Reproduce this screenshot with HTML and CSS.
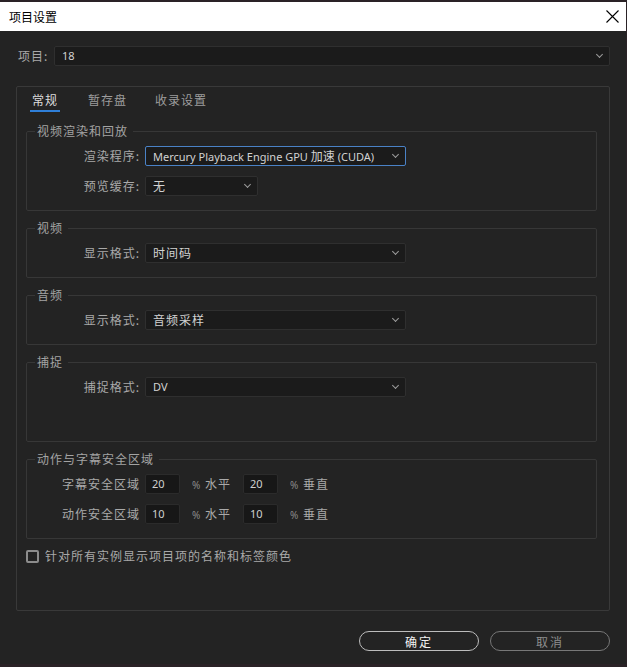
FILE: index.html
```html
<!DOCTYPE html>
<html lang="zh-CN">
<head>
    <meta charset="UTF-8">
    <meta name="viewport" content="width=device-width, initial-scale=1.0">
    <title>项目设置</title>
    <link rel="stylesheet" href="styles.css">
</head>
<body>
    <div class="window">
        <div class="titlebar">
            <span class="title">项目设置</span>
            <svg class="close" width="13" height="13" viewBox="0 0 13 13">
                <path d="M0.5 0.5 L12.5 12.5 M12.5 0.5 L0.5 12.5" stroke="#000" stroke-width="1.1" fill="none"/>
            </svg>
        </div>

        <div class="content">
            <div class="project-row">
                <span class="label">项目:</span>
                <div class="select grow"><span class="value num">18</span><span class="chev"></span></div>
            </div>

            <div class="panel">
                <div class="tabs">
                    <span class="tab active">常规</span>
                    <span class="tab">暂存盘</span>
                    <span class="tab">收录设置</span>
                </div>

                <fieldset>
                    <legend>视频渲染和回放</legend>
                    <div class="row">
                        <span class="label">渲染程序:</span>
                        <div class="select wide focused"><span class="value latin">Mercury Playback Engine GPU <b>加速</b> (CUDA)</span><span class="chev"></span></div>
                    </div>
                    <div class="row">
                        <span class="label">预览缓存:</span>
                        <div class="select small"><span class="value">无</span><span class="chev"></span></div>
                    </div>
                </fieldset>

                <fieldset>
                    <legend>视频</legend>
                    <div class="row">
                        <span class="label">显示格式:</span>
                        <div class="select wide"><span class="value">时间码</span><span class="chev"></span></div>
                    </div>
                </fieldset>

                <fieldset>
                    <legend>音频</legend>
                    <div class="row">
                        <span class="label">显示格式:</span>
                        <div class="select wide"><span class="value">音频采样</span><span class="chev"></span></div>
                    </div>
                </fieldset>

                <fieldset class="capture">
                    <legend>捕捉</legend>
                    <div class="row">
                        <span class="label">捕捉格式:</span>
                        <div class="select wide"><span class="value latin">DV</span><span class="chev"></span></div>
                    </div>
                </fieldset>

                <fieldset>
                    <legend>动作与字幕安全区域</legend>
                    <div class="row">
                        <span class="label">字幕安全区域</span>
                        <div class="field">20</div>
                        <span class="unit"><i>%</i> 水平</span>
                        <div class="field">20</div>
                        <span class="unit"><i>%</i> 垂直</span>
                    </div>
                    <div class="row">
                        <span class="label">动作安全区域</span>
                        <div class="field">10</div>
                        <span class="unit"><i>%</i> 水平</span>
                        <div class="field">10</div>
                        <span class="unit"><i>%</i> 垂直</span>
                    </div>
                </fieldset>

                <label class="check">
                    <span class="box"></span>
                    <span>针对所有实例显示项目项的名称和标签颜色</span>
                </label>
            </div>

            <div class="actions">
                <button class="btn primary">确定</button>
                <button class="btn">取消</button>
            </div>
        </div>
    </div>
</body>
</html>
```

FILE: styles.css
```css
body {
    margin: 0;
    background: #2a2226;
    font-family: "Noto Sans CJK SC", "Noto Sans", sans-serif;
    font-size: 12px;
    line-height: 16px;
    color: #a9a9a9;
}

.window {
    margin-top: 2px;
    width: 626px;
    height: 662px;
    background: #232323;
}

.titlebar {
    height: 29px;
    background: #ffffff;
    display: flex;
    align-items: center;
    justify-content: space-between;
    padding: 0 7px 0 9px;
}

.title {
    color: #000;
    font-size: 12px;
}

.content {
    padding: 15px 16px 0 16px;
}

/* project selector on top */
.project-row {
    display: flex;
    align-items: center;
    height: 20px;
}

.project-row .label {
    width: 38px;
    padding-left: 2px;
    box-sizing: border-box;
    letter-spacing: 1px;
}

.select {
    height: 20px;
    box-sizing: border-box;
    background: #1b1b1b;
    border: 1px solid #2f2f2f;
    border-radius: 2px;
    display: flex;
    align-items: center;
    justify-content: space-between;
    padding: 0 6px 0 7px;
    color: #d2d2d2;
}

.select.grow { flex: 1; }
.select.wide { width: 261px; }
.select.small { width: 113px; }

.select.focused {
    border-color: #4a82c6;
}

.value {
    letter-spacing: 1px;
    white-space: nowrap;
}

.value.latin, .value.num {
    font-family: "Noto Sans", "Noto Sans CJK SC", sans-serif;
    font-size: 11px;
    letter-spacing: 0;
}

.value.latin b {
    font-weight: normal;
    font-family: "Noto Sans CJK SC", sans-serif;
    font-size: 12px;
}

.chev {
    width: 4px;
    height: 4px;
    border-right: 1px solid #9c9c9c;
    border-bottom: 1px solid #9c9c9c;
    transform: rotate(45deg);
    margin: 0 1px 3px 0;
}

/* tabs panel */
.panel {
    margin-top: 20px;
    height: 525px;
    box-sizing: border-box;
    border: 1px solid #393939;
    border-radius: 2px;
}

.tabs {
    display: flex;
    padding: 5px 0 0 13px;
    margin-bottom: 11px;
}

.tab {
    padding: 0 2px 2px 2px;
    margin-right: 26px;
    letter-spacing: 1px;
    border-bottom: 2px solid transparent;
    color: #9d9d9d;
}

.tab:nth-child(2) { margin-right: 24px; }

.tab.active {
    color: #dcdcdc;
    border-bottom-color: #2f7fd8;
}

fieldset {
    margin: 0 12px 9px 9px;
    padding: 0 0 14px 0;
    border: 1px solid #373737;
    border-radius: 2px;
}

legend {
    margin-left: 8px;
    padding: 0 5px 0 2px;
    letter-spacing: 1px;
    color: #a3a3a3;
}

fieldset.capture { padding-bottom: 44px; }

.row {
    display: flex;
    align-items: center;
    height: 20px;
    margin-top: 7px;
}

.row + .row { margin-top: 10px; }

.row .label {
    width: 113px;
    margin-right: 5px;
    text-align: right;
    letter-spacing: 1px;
}

.field {
    width: 35px;
    height: 20px;
    box-sizing: border-box;
    background: #171717;
    border: 1px solid #2b2b2b;
    border-radius: 2px;
    padding-left: 6px;
    font-family: "Noto Sans", sans-serif;
    font-size: 11px;
    line-height: 18px;
    color: #cfcfcf;
    margin-right: 12px;
}

.unit {
    width: 40px;
    margin-right: 11px;
    letter-spacing: 1px;
    white-space: nowrap;
}

.unit i {
    font-style: normal;
    font-family: "Noto Sans", sans-serif;
    font-size: 10px;
    color: #8a8a8a;
}

.check {
    display: flex;
    align-items: center;
    margin: 2px 0 0 9px;
    letter-spacing: 1px;
}

.box {
    width: 13px;
    height: 13px;
    box-sizing: border-box;
    border: 2px solid #8c8c8c;
    border-radius: 2px;
    margin-right: 6px;
}

.actions {
    display: flex;
    justify-content: flex-end;
    gap: 11px;
    margin-top: 20px;
}

.btn {
    width: 120px;
    height: 20px;
    box-sizing: border-box;
    background: transparent;
    border: 1.5px solid #a9a9a9;
    border-radius: 10px;
    font-family: "Noto Sans CJK SC", sans-serif;
    font-size: 12px;
    letter-spacing: 2px;
    color: #8e8e8e;
    padding: 0;
}

.btn.primary {
    color: #f2f2f2;
    border-color: #bcbcbc;
}

.btn:not(.primary) { border-color: #777; }
```
